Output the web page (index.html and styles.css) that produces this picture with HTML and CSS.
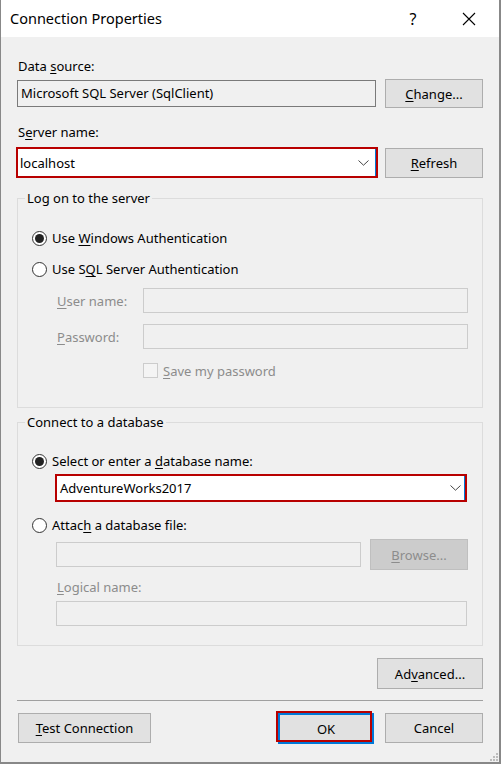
FILE: index.html
```html
<!DOCTYPE html>
<html>
<head>
<meta charset="utf-8">
<link rel="stylesheet" href="styles.css">
</head>
<body>
<div class="window">
  <div class="titlebar">
    <span class="title">Connection Properties</span>
    <div class="tb-buttons">
      <span class="help">?</span>
      <svg class="close" width="14" height="14" viewBox="0 0 14 14"><path d="M1 1 L13 13 M13 1 L1 13" stroke="#000" stroke-width="1.1" fill="none"/></svg>
    </div>
  </div>
  <div class="content">
    <div class="label l-first">Data <u>s</u>ource:</div>
    <div class="row row-ds">
      <div class="textbox readonly">Microsoft SQL Server (SqlClient)</div>
      <button class="btn btn-side"><u>C</u>hange...</button>
    </div>
    <div class="label l-server">S<u>e</u>rver name:</div>
    <div class="row row-server">
      <div class="combo combo-server">
        <span class="combo-text">localhost</span>
        <svg class="chev" width="11" height="6" viewBox="0 0 11 6"><path d="M0.5 0.5 L5.5 5.2 L10.5 0.5" stroke="#444" stroke-width="1" fill="none"/></svg>
      </div>
      <button class="btn btn-side btn-refresh"><u>R</u>efresh</button>
    </div>

    <fieldset class="group group-logon">
      <legend>Log on to the server</legend>
      <div class="opt opt-first"><span class="radio checked"></span><span>Use <u>W</u>indows Authentication</span></div>
      <div class="opt opt-second"><span class="radio"></span><span>Use S<u>Q</u>L Server Authentication</span></div>
      <div class="field-row fr-user"><span class="flabel disabled"><u>U</u>ser name:</span><div class="textbox dis"></div></div>
      <div class="field-row fr-pass"><span class="flabel disabled"><u>P</u>assword:</span><div class="textbox dis"></div></div>
      <div class="check-row"><span class="checkbox"></span><span class="disabled"><u>S</u>ave my password</span></div>
    </fieldset>

    <fieldset class="group group-db">
      <legend>Connect to a database</legend>
      <div class="opt opt-db"><span class="radio checked"></span><span>Select or enter a <u>d</u>atabase name:</span></div>
      <div class="combo combo-db">
        <span class="combo-text">AdventureWorks2017</span>
        <svg class="chev" width="11" height="6" viewBox="0 0 11 6"><path d="M0.5 0.5 L5.5 5.2 L10.5 0.5" stroke="#444" stroke-width="1" fill="none"/></svg>
      </div>
      <div class="opt opt-attach"><span class="radio"></span><span>Attac<u>h</u> a database file:</span></div>
      <div class="file-row">
        <div class="textbox dis"></div>
        <button class="btn btn-dis"><u>B</u>rowse...</button>
      </div>
      <div class="label disabled l-logical"><u>L</u>ogical name:</div>
      <div class="textbox dis tb-logical"></div>
    </fieldset>

    <div class="adv-row">
      <button class="btn btn-adv">Ad<u>v</u>anced...</button>
    </div>
    <div class="separator"></div>
    <div class="bottom-row">
      <button class="btn btn-test"><u>T</u>est Connection</button>
      <div class="bottom-right">
        <div class="ok-wrap">
          <button class="btn btn-ok">OK</button>
          <span class="ok-mark"></span>
        </div>
        <button class="btn btn-cancel">Cancel</button>
      </div>
    </div>
  </div>
  <svg class="grip" width="9" height="9" viewBox="0 0 9 9">
    <rect x="6" y="0" width="2" height="2" fill="#bcbcbc"/>
    <rect x="3" y="3" width="2" height="2" fill="#bcbcbc"/>
    <rect x="6" y="3" width="2" height="2" fill="#bcbcbc"/>
    <rect x="0" y="6" width="2" height="2" fill="#bcbcbc"/>
    <rect x="3" y="6" width="2" height="2" fill="#bcbcbc"/>
    <rect x="6" y="6" width="2" height="2" fill="#bcbcbc"/>
  </svg>
</div>
</body>
</html>
```

FILE: styles.css
```css
* { box-sizing: border-box; }
html, body {
  margin: 0;
  padding: 0;
  background: #f0f0f0;
}
body {
  width: 501px;
  height: 764px;
  font-family: "Noto Sans", "Open Sans", sans-serif;
  font-size: 13px;
  color: #000;
}
u { text-decoration: underline; text-underline-offset: 2px; text-decoration-thickness: 1px; }

.window {
  position: relative;
  width: 501px;
  height: 764px;
  background: #f0f0f0;
  border-left: 1px solid #888;
  border-right: 2px solid #888;
  border-bottom: 2px solid #888;
}

.titlebar {
  height: 37px;
  background: #fff;
  display: flex;
  align-items: center;
  justify-content: space-between;
  padding-left: 9px;
}
.title {
  font-size: 14.5px;
  line-height: 20px;
  margin-top: -1px;
}
.tb-buttons {
  display: flex;
  align-items: center;
  height: 37px;
}
.help {
  font-size: 16px;
  width: 46px;
  text-align: center;
  margin-right: 26px;
}
.close {
  margin-right: 23px;
}

.content {
  padding: 0 16px 0 16px;
}

.label {
  line-height: 16px;
  height: 16px;
  padding-left: 1px;
}
.l-first { margin-top: 21px; }
.l-server { margin-top: 16px; }

.row {
  display: flex;
  align-items: center;
  gap: 9px;
}
.row-ds { margin-top: 5px; height: 29px; }
.row-server { margin-top: 7px; height: 31px; }

.textbox {
  height: 27px;
  border: 1px solid #7a7a7a;
  background: #fff;
  line-height: 25px;
  padding-left: 3px;
  white-space: nowrap;
}
.textbox.readonly {
  flex: 1;
  background: #f0f0f0;
}
.textbox.dis {
  height: 25px;
  border-color: #cccccc;
  background: #f0f0f0;
}

.btn {
  font: inherit;
  color: #000;
  background: #e1e1e1;
  border: 1px solid #adadad;
  padding: 0;
  margin: 0;
  text-align: center;
  line-height: 16px;
}
.btn-side { width: 98px; height: 29px; }
.btn-refresh { height: 30px; }

.combo {
  position: relative;
  display: flex;
  align-items: center;
  justify-content: space-between;
  background: #fff;
  border: 2px solid #b80000;
  box-shadow: inset -1px 0 0 #0078d7;
}
.combo-server {
  flex: 1;
  height: 31px;
  margin-left: -1px;
  margin-right: -2px;
  padding: 0 7px 0 2px;
}
.combo-text { line-height: 16px; }
.chev { display: block; }

.group {
  margin: 0;
  padding: 0;
  border: 1px solid #dcdcdc;
  min-width: 0;
}
.group legend {
  padding: 0 2px;
  margin-left: 7px;
  line-height: 16px;
  height: 16px;
}
.group-logon {
  margin-top: 12px;
  padding-bottom: 29px;
}
.group-db {
  margin-top: 6px;
  padding-bottom: 19px;
}

.opt {
  display: flex;
  align-items: center;
  height: 16px;
  line-height: 16px;
  padding-left: 14px;
  gap: 5px;
}
.opt-first { margin-top: 24px; }
.opt-second { margin-top: 15px; }
.opt-db { margin-top: 23px; }
.opt-attach { margin-top: 15px; }

.radio {
  width: 15px;
  height: 15px;
  border: 1px solid #333;
  border-radius: 50%;
  background: #fff;
  display: flex;
  align-items: center;
  justify-content: center;
  flex: none;
}
.radio.checked::after {
  content: "";
  width: 9px;
  height: 9px;
  border-radius: 50%;
  background: #222;
}

.disabled { color: #8c8c8c; }

.field-row {
  display: flex;
  align-items: center;
  padding-left: 39px;
  padding-right: 14px;
  margin-top: 11px;
}
.fr-user { margin-top: 11px; }
.flabel {
  width: 86px;
  flex: none;
  line-height: 16px;
}
.field-row .textbox { flex: 1; }

.check-row {
  display: flex;
  align-items: center;
  gap: 5px;
  margin-top: 14px;
  padding-left: 125px;
  height: 15px;
  line-height: 16px;
}
.checkbox {
  width: 15px;
  height: 15px;
  border: 1px solid #cccccc;
  background: #f4f4f4;
  flex: none;
}

.combo-db {
  height: 28px;
  margin: 5px 15px 0 37px;
  padding: 0 4px 0 3px;
}

.file-row {
  display: flex;
  align-items: center;
  gap: 9px;
  margin-top: 6px;
  height: 31px;
  padding-left: 38px;
  padding-right: 14px;
}
.file-row .textbox { flex: 1; }
.btn-dis {
  width: 98px;
  height: 31px;
  background: #cccccc;
  border-color: #bfbfbf;
  color: #8c8c8c;
}
.l-logical {
  margin-top: 9px;
  padding-left: 39px;
}
.tb-logical {
  margin: 6px 15px 0 38px;
  height: 26px;
}

.adv-row {
  display: flex;
  justify-content: flex-end;
  margin-top: 12px;
}
.btn-adv { width: 106px; height: 31px; }

.separator {
  height: 1px;
  background: #a0a0a0;
  margin-top: 11px;
}

.bottom-row {
  display: flex;
  justify-content: space-between;
  align-items: flex-start;
  margin-top: 12px;
}
.btn-test { width: 133px; height: 30px; margin-left: 1px; }
.bottom-right {
  display: flex;
  align-items: flex-start;
  gap: 11px;
}
.ok-wrap { position: relative; }
.btn-ok {
  display: block;
  width: 96px;
  height: 31px;
  border: 2px solid #0078d7;
}
.ok-mark {
  position: absolute;
  left: -2px;
  top: -2px;
  width: 96px;
  height: 31px;
  border: 2px solid #b80000;
}
.btn-cancel { width: 98px; height: 30px; }

.grip {
  position: absolute;
  right: 0;
  bottom: 0;
}
```
